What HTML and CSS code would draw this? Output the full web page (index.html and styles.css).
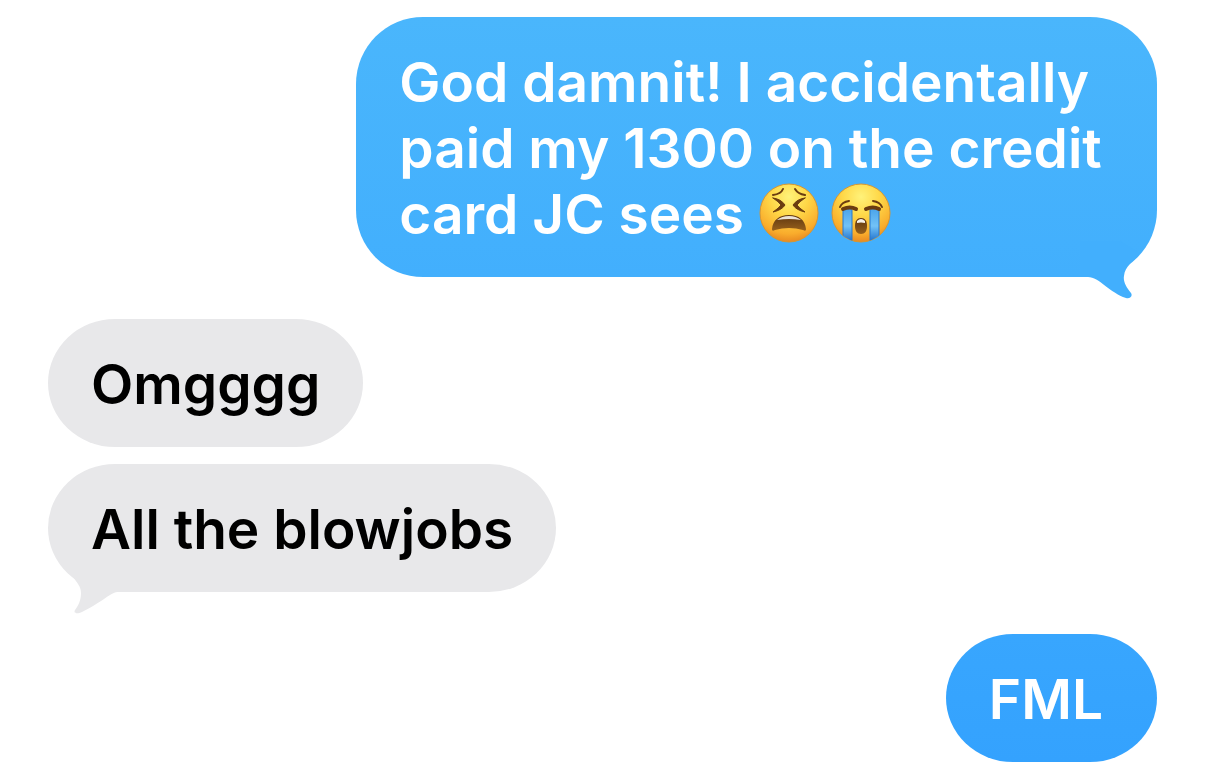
FILE: index.html
```html
<!DOCTYPE html>
<html lang="en">
<head>
<meta charset="utf-8">
<meta name="viewport" content="width=device-width, initial-scale=1">
<title>Messages</title>
<link rel="stylesheet" href="styles.css">
</head>
<body>
<main class="thread">
  <div class="group sent">
    <p class="bubble large">God damnit! I accidentally paid my 1300 on the credit card JC sees <svg class="emoji" viewBox="0 0 60 60" role="img" aria-label="tired face">
        <defs>
          <radialGradient id="skin" cx="50%" cy="22%" r="80%">
            <stop offset="0" stop-color="#fff27a"/>
            <stop offset=".4" stop-color="#ffd848"/>
            <stop offset=".8" stop-color="#f9ac2c"/>
            <stop offset="1" stop-color="#e68420"/>
          </radialGradient>
          <linearGradient id="mouth" x1="0" y1="0" x2="0" y2="1">
            <stop offset="0" stop-color="#5e3510"/>
            <stop offset="1" stop-color="#96601c"/>
          </linearGradient>
          <linearGradient id="tear" x1="0" y1="0" x2="0" y2="1">
            <stop offset="0" stop-color="#4ba4ea"/>
            <stop offset=".5" stop-color="#72c2f7"/>
            <stop offset="1" stop-color="#1668c8"/>
          </linearGradient>
          <clipPath id="face"><circle cx="30" cy="30" r="29"/></clipPath>
        </defs>
        <circle cx="30" cy="30" r="29" fill="url(#skin)" stroke="#d9962f" stroke-width="1"/>
        <g fill="none" stroke="#6b3c10" stroke-width="2" stroke-linecap="round" stroke-linejoin="round">
          <path d="M14 12q8-1 10-6M36 6q3 5 10 6"/>
          <path fill="#6b3c10" stroke-width="1" d="M14 15q8 1 12 7-3 5-12 7 6-4 8-7-2-3-8-7zM46 15q-8 1-12 7 3 5 12 7-6-4-8-7 2-3 8-7z"/>
        </g>
        <path d="M13 46C14 37 20 32 30 32s16 5 17 14c0 2-1 2-3 1q-14-4-28 0c-2 1-3 1-3-1z" fill="url(#mouth)"/>
        <path d="M18 37q5-4 12-4t12 4q-12-2-24 0z" fill="#ebe2d6"/>
      </svg><svg class="emoji next" viewBox="0 0 60 60" role="img" aria-label="loudly crying face">
        <circle cx="30" cy="30" r="29" fill="url(#skin)" stroke="#d9962f" stroke-width="1"/>
        <g clip-path="url(#face)">
          <path d="M12 26h9v34H12zM39 26h9v34H39z" fill="url(#tear)"/>
          <path d="M12 27v33M21 27v33M39 27v33M48 27v33" fill="none" stroke="#2678cf" stroke-width="1"/>
        </g>
        <g fill="none" stroke="#6b3c10" stroke-linecap="round">
          <path stroke-width="2" d="M9 24q2-5 9-6M42 18q7 1 9 6"/>
          <path stroke-width="4" d="M12 26q7-3 13 0M35 26q7-3 13 0"/>
        </g>
        <path d="M24 43c0-5 2-8 6-8s6 3 6 8-2 8-6 8-6-3-6-8z" fill="url(#mouth)"/>
        <path d="M26 38q4-4 8 0v2q-4-1-8 0z" fill="#f7f1e8"/>
      </svg><svg class="tail tail-right" viewBox="0 0 60 60" aria-hidden="true"><path d="M0 36H8C19 36 30 52 46 57C50 58 53 55 51 52C46 46 43 40 44 35C45 25 54 20 60 12L40 0H0Z"/></svg></p>
  </div>
  <div class="group received">
    <p class="bubble">Omgggg</p>
    <p class="bubble">All the blowjobs<svg class="tail tail-left" viewBox="0 0 60 60" aria-hidden="true"><path d="M60 32H49C40 32 36 40 12 52C8 54 3 54 5 50C8 46 11 41 11 33C11 26 7 23 3 17L20 0H60Z"/></svg></p>
  </div>
  <div class="group sent">
    <p class="bubble latest">FML</p>
  </div>
</main>
</body>
</html>
```
FILE: styles.css
```css
* {
  box-sizing: border-box;
}

body {
  margin: 0;
  background: #fff;
  color: #000;
  font-family: Inter, "Liberation Sans", sans-serif;
  font-size: 55px;
  font-weight: 600;
  line-height: 66px;
}

.thread {
  display: flex;
  flex-direction: column;
  gap: 42px;
  padding: 17px 49px 11px 48px;
}

.group {
  display: flex;
  flex-direction: column;
  gap: 17px;
}

.sent {
  align-items: flex-end;
}

.received {
  align-items: flex-start;
}

.bubble {
  position: relative;
  max-width: 72.2%;
  margin: 0;
  padding: 32px 43px 30px;
  border-radius: 67px / 64px;
  background: #e8e8ea;
}

.sent .bubble {
  background: linear-gradient(#4ab6fc, #42affd);
  color: #fff;
}

.sent .large {
  border-radius: 67px;
}

.sent .latest {
  padding-right: 54px;
  background: linear-gradient(#38a6fe, #34a2fe);
}

.emoji {
  width: 60px;
  height: 60px;
  margin-block: -8px;
  margin-left: 1px;
  vertical-align: -1px;
}

.emoji.next {
  margin-left: 12px;
}

.tail {
  position: absolute;
  width: 60px;
  height: 60px;
}

.tail-right {
  right: 17px;
  bottom: -24px;
  fill: #42affd;
}

.tail-left {
  left: 22px;
  bottom: -28px;
  fill: #e8e8ea;
}
```
